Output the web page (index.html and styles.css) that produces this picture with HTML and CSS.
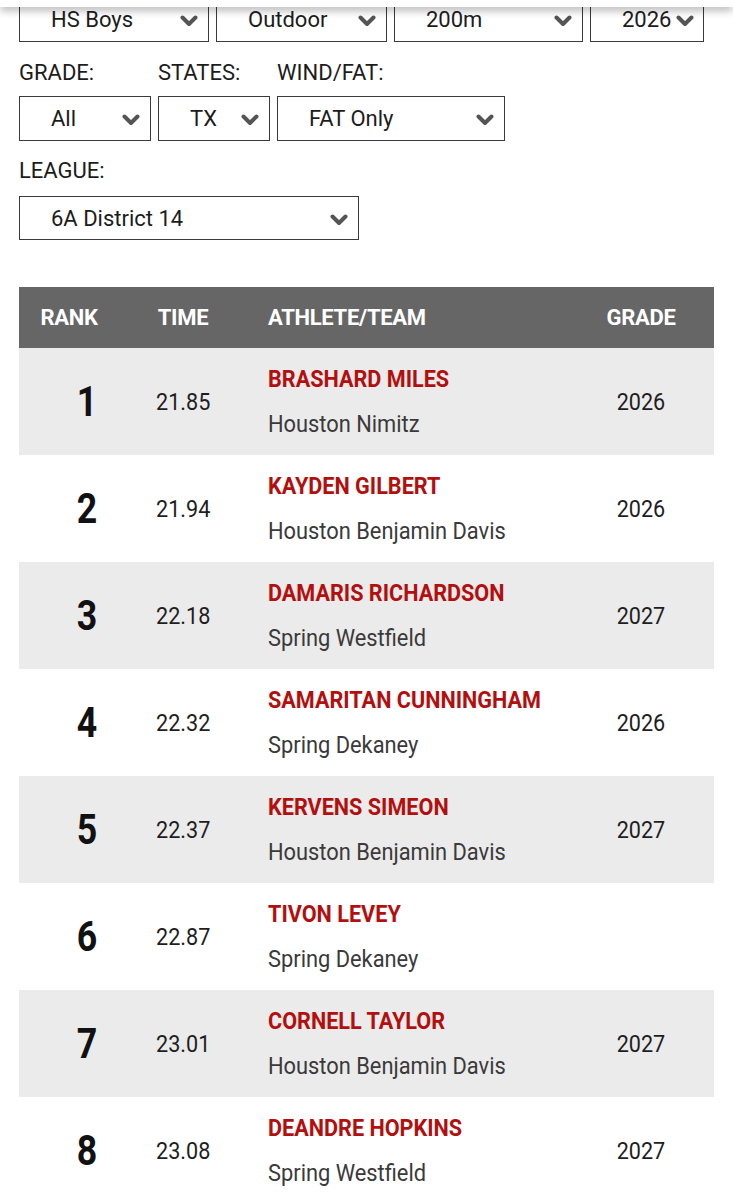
FILE: index.html
```html
<!DOCTYPE html>
<html lang="en">
<head>
<meta charset="utf-8">
<title>Rankings</title>
<link rel="stylesheet" href="styles.css">
</head>
<body>
<div class="topbar"></div>
<main class="page">
  <div class="filter-row first">
    <div class="select w190"><span>HS Boys</span><svg class="chev" viewBox="0 0 18 12"><polyline points="2.5,2.5 9,9 15.5,2.5"/></svg></div>
    <div class="select w171"><span>Outdoor</span><svg class="chev" viewBox="0 0 18 12"><polyline points="2.5,2.5 9,9 15.5,2.5"/></svg></div>
    <div class="select w189"><span>200m</span><svg class="chev" viewBox="0 0 18 12"><polyline points="2.5,2.5 9,9 15.5,2.5"/></svg></div>
    <div class="select w114 tight"><span>2026</span><svg class="chev" viewBox="0 0 18 12"><polyline points="2.5,2.5 9,9 15.5,2.5"/></svg></div>
  </div>

  <div class="filter-row labeled">
    <div class="field">
      <div class="label">GRADE:</div>
      <div class="select w132"><span>All</span><svg class="chev" viewBox="0 0 18 12"><polyline points="2.5,2.5 9,9 15.5,2.5"/></svg></div>
    </div>
    <div class="field">
      <div class="label">STATES:</div>
      <div class="select w112"><span>TX</span><svg class="chev" viewBox="0 0 18 12"><polyline points="2.5,2.5 9,9 15.5,2.5"/></svg></div>
    </div>
    <div class="field">
      <div class="label">WIND/FAT:</div>
      <div class="select w228"><span>FAT Only</span><svg class="chev" viewBox="0 0 18 12"><polyline points="2.5,2.5 9,9 15.5,2.5"/></svg></div>
    </div>
  </div>

  <div class="filter-row labeled league">
    <div class="field">
      <div class="label">LEAGUE:</div>
      <div class="select w340 short"><span>6A District 14</span><svg class="chev" viewBox="0 0 18 12"><polyline points="2.5,2.5 9,9 15.5,2.5"/></svg></div>
    </div>
  </div>

  <section class="results">
    <div class="thead">
      <div class="th c-rank">RANK</div>
      <div class="th c-time">TIME</div>
      <div class="th c-ath">ATHLETE/TEAM</div>
      <div class="th c-grade">GRADE</div>
    </div>

    <div class="tr alt">
      <div class="td c-rank"><span class="rank">1</span></div>
      <div class="td c-time"><span class="num">21.85</span></div>
      <div class="td c-ath"><span class="name">BRASHARD MILES</span><span class="team">Houston Nimitz</span></div>
      <div class="td c-grade"><span class="num">2026</span></div>
    </div>
    <div class="tr">
      <div class="td c-rank"><span class="rank">2</span></div>
      <div class="td c-time"><span class="num">21.94</span></div>
      <div class="td c-ath"><span class="name">KAYDEN GILBERT</span><span class="team">Houston Benjamin Davis</span></div>
      <div class="td c-grade"><span class="num">2026</span></div>
    </div>
    <div class="tr alt">
      <div class="td c-rank"><span class="rank">3</span></div>
      <div class="td c-time"><span class="num">22.18</span></div>
      <div class="td c-ath"><span class="name">DAMARIS RICHARDSON</span><span class="team">Spring Westfield</span></div>
      <div class="td c-grade"><span class="num">2027</span></div>
    </div>
    <div class="tr">
      <div class="td c-rank"><span class="rank">4</span></div>
      <div class="td c-time"><span class="num">22.32</span></div>
      <div class="td c-ath"><span class="name">SAMARITAN CUNNINGHAM</span><span class="team">Spring Dekaney</span></div>
      <div class="td c-grade"><span class="num">2026</span></div>
    </div>
    <div class="tr alt">
      <div class="td c-rank"><span class="rank">5</span></div>
      <div class="td c-time"><span class="num">22.37</span></div>
      <div class="td c-ath"><span class="name">KERVENS SIMEON</span><span class="team">Houston Benjamin Davis</span></div>
      <div class="td c-grade"><span class="num">2027</span></div>
    </div>
    <div class="tr">
      <div class="td c-rank"><span class="rank">6</span></div>
      <div class="td c-time"><span class="num">22.87</span></div>
      <div class="td c-ath"><span class="name">TIVON LEVEY</span><span class="team">Spring Dekaney</span></div>
      <div class="td c-grade"><span class="num"></span></div>
    </div>
    <div class="tr alt">
      <div class="td c-rank"><span class="rank">7</span></div>
      <div class="td c-time"><span class="num">23.01</span></div>
      <div class="td c-ath"><span class="name">CORNELL TAYLOR</span><span class="team">Houston Benjamin Davis</span></div>
      <div class="td c-grade"><span class="num">2027</span></div>
    </div>
    <div class="tr">
      <div class="td c-rank"><span class="rank">8</span></div>
      <div class="td c-time"><span class="num">23.08</span></div>
      <div class="td c-ath"><span class="name">DEANDRE HOPKINS</span><span class="team">Spring Westfield</span></div>
      <div class="td c-grade"><span class="num">2027</span></div>
    </div>
  </section>
</main>
</body>
</html>
```
FILE: styles.css
```css
* { box-sizing: border-box; }

html, body {
  margin: 0;
  padding: 0;
  background: #ffffff;
  overflow: hidden;
}

body {
  font-family: Roboto, "Liberation Sans", sans-serif;
  color: #1a1a1a;
}

.topbar {
  position: fixed;
  top: 0;
  left: 0;
  right: 0;
  height: 7px;
  background: #ffffff;
  box-shadow: 0 3px 9px rgba(0, 0, 0, 0.35);
  z-index: 5;
}

.page {
  padding: 0 19px;
}

.filter-row {
  display: flex;
  gap: 7px;
}

.filter-row.first {
  margin-top: -3px;
}

.filter-row.labeled {
  margin-top: 18px;
}

.filter-row.league {
  margin-top: 17px;
}

.field {
  display: flex;
  flex-direction: column;
}

.label {
  font-size: 22px;
  line-height: 26px;
  color: #1c1c1c;
  margin-bottom: 10px;
}

.league .label {
  margin-bottom: 12px;
}

.select {
  height: 45px;
  border: 1.5px solid #3a3a3a;
  display: flex;
  align-items: center;
  justify-content: space-between;
  padding: 0 10px 0 31px;
  font-size: 22px;
  color: #1c1c1c;
  background: #fff;
}

.select.short { height: 44px; }

.select.tight { padding-right: 9px; }

.chev {
  width: 18px;
  height: 12px;
  flex: none;
  margin-top: 3px;
}

.chev polyline {
  fill: none;
  stroke: #555555;
  stroke-width: 4;
  stroke-linecap: round;
  stroke-linejoin: round;
}

.w190 { width: 190px; }
.w171 { width: 171px; }
.w189 { width: 189px; }
.w114 { width: 114px; }
.w132 { width: 132px; }
.w112 { width: 112px; }
.w228 { width: 228px; }
.w340 { width: 340px; }

.results {
  margin-top: 47px;
}

.thead,
.tr {
  display: grid;
  grid-template-columns: 100px 128px 321px 146px;
}

.thead {
  height: 61px;
  background: #666666;
  align-items: center;
}

.th {
  font-weight: 700;
  font-size: 22px;
  color: #ffffff;
  text-align: center;
  letter-spacing: -0.3px;
}

.th.c-ath {
  text-align: left;
  padding-left: 21px;
}

.tr {
  height: 107px;
  background: #ffffff;
}

.tr.alt {
  background: #ebebeb;
}

.td {
  display: flex;
  align-items: center;
  justify-content: center;
}

.td.c-rank {
  padding-left: 36px;
}

.td.c-ath {
  flex-direction: column;
  align-items: flex-start;
  justify-content: center;
  padding-left: 21px;
  gap: 16px;
}

.rank {
  display: inline-block;
  font-size: 42px;
  font-weight: 700;
  color: #111111;
  transform: scaleX(0.85);
}

.num {
  display: inline-block;
  font-size: 24px;
  color: #1e1e1e;
  transform: scaleX(0.9);
}

.name {
  display: inline-block;
  font-size: 23px;
  line-height: 28px;
  font-weight: 700;
  color: #b30f0f;
  transform: scaleX(0.94);
  transform-origin: left center;
  white-space: nowrap;
}

.team {
  display: inline-block;
  font-size: 24px;
  line-height: 28px;
  color: #3a3a3a;
  transform: scaleX(0.91);
  transform-origin: left center;
  white-space: nowrap;
}
```
